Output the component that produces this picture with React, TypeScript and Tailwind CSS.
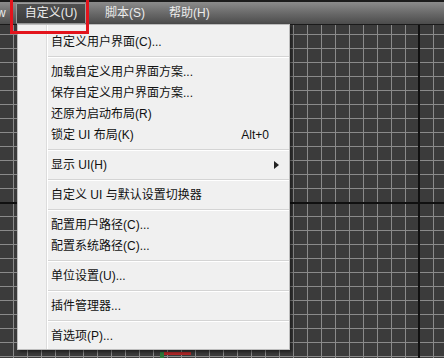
import { Fragment } from "react"

type Item = { label: string; shortcut?: string; submenu?: boolean } | "sep"

const items: Item[] = [
  { label: "自定义用户界面(C)..." },
  "sep",
  { label: "加载自定义用户界面方案..." },
  { label: "保存自定义用户界面方案..." },
  { label: "还原为启动布局(R)" },
  { label: "锁定 UI 布局(K)", shortcut: "Alt+0" },
  "sep",
  { label: "显示 UI(H)", submenu: true },
  "sep",
  { label: "自定义 UI 与默认设置切换器" },
  "sep",
  { label: "配置用户路径(C)..." },
  { label: "配置系统路径(C)..." },
  "sep",
  { label: "单位设置(U)..." },
  "sep",
  { label: "插件管理器..." },
  "sep",
  { label: "首选项(P)..." },
]

const font = { fontFamily: '"Liberation Sans", "Noto Sans CJK SC", sans-serif' }

// viewport grid lines
const vLines = Array.from({ length: 32 }, (_, k) => 13 + k * 14)
const hLines = Array.from({ length: 26 }, (_, k) => 6 + k * 14)

function ViewportGrid() {
  return (
    <div className="absolute inset-0">
      {vLines.map((x) => (
        <div key={"v" + x} className="absolute top-0 h-full w-px bg-[#8a8a8a]" style={{ left: x }} />
      ))}
      {hLines.map((y) => (
        <div key={"h" + y} className="absolute left-0 w-full h-px bg-[#8a8a8a]" style={{ top: y }} />
      ))}
      <div className="absolute left-0 top-[202px] w-full h-[2px] bg-[#101010]" />
      <div className="absolute left-[418px] top-0 w-[2px] h-full bg-[#101010]" />
      <div className="absolute left-[163px] top-[352px] w-[28px] h-[3px] bg-[#b02828]" />
      <div className="absolute left-[160px] top-[352px] w-[4px] h-[6px] bg-[#2c7a3a]" />
    </div>
  )
}

export default function App() {
  return (
    <div
      className="relative w-[444px] h-[358px] overflow-hidden bg-[#3b3b3b] text-[12px]"
      style={font}
    >
      <ViewportGrid />

      {/* menu bar */}
      <div className="relative border-t-2 border-[#1c1c1c] h-[25px] bg-gradient-to-b from-[#8c8c8c] via-[#6a6a6a] to-[#4c4c4c] border-b border-b-[#1a1a1a] flex items-center text-[#ececec]">
        <span className="ml-[-3px] w-[19px]">w</span>
        <div className="h-[21px] w-[70px] flex items-center justify-center bg-gradient-to-b from-[#505050] to-[#3a3a3a] border border-[#9a9a9a] rounded-[1px]">
          自定义(U)
        </div>
        <span className="ml-[19px]">脚本(S)</span>
        <span className="ml-[24px]">帮助(H)</span>
      </div>

      {/* dropdown */}
      <div className="absolute left-[17px] top-[24px] w-[273px] bg-[#f0f0f0] border border-[#bdbdbd] shadow-[2px_2px_3px_rgba(0,0,0,0.5)] flex text-[#111]">
        <div className="w-[29px] border-r border-[#dcdcdc] shrink-0" />
        <div className="flex-1 border-l border-white pt-[6px] pb-[3px]">
          {items.map((it, i) =>
            it === "sep" ? (
              <div key={i} className="h-[9px] flex flex-col justify-center">
                <div className="border-t border-[#d4d4d4] border-b border-b-white" />
              </div>
            ) : (
              <Fragment key={i}>
                <div
                  className={
                    it.submenu
                      ? "h-[21px] flex items-center justify-between pl-[3px] pr-[10px]"
                      : "h-[21px] flex items-center justify-between pl-[3px] pr-[20px]"
                  }
                >
                  <span>{it.label}</span>
                  {it.shortcut && <span>{it.shortcut}</span>}
                  {it.submenu && (
                    <svg width="5" height="8" viewBox="0 0 5 8">
                      <path d="M0 0 L5 4 L0 8 Z" fill="#222" />
                    </svg>
                  )}
                </div>
              </Fragment>
            )
          )}
        </div>
      </div>

      {/* red highlight frame */}
      <div className="absolute left-[10px] top-[-6px] w-[79px] h-[40px] border-[3px] border-[#e3141c]" />
    </div>
  )
}
